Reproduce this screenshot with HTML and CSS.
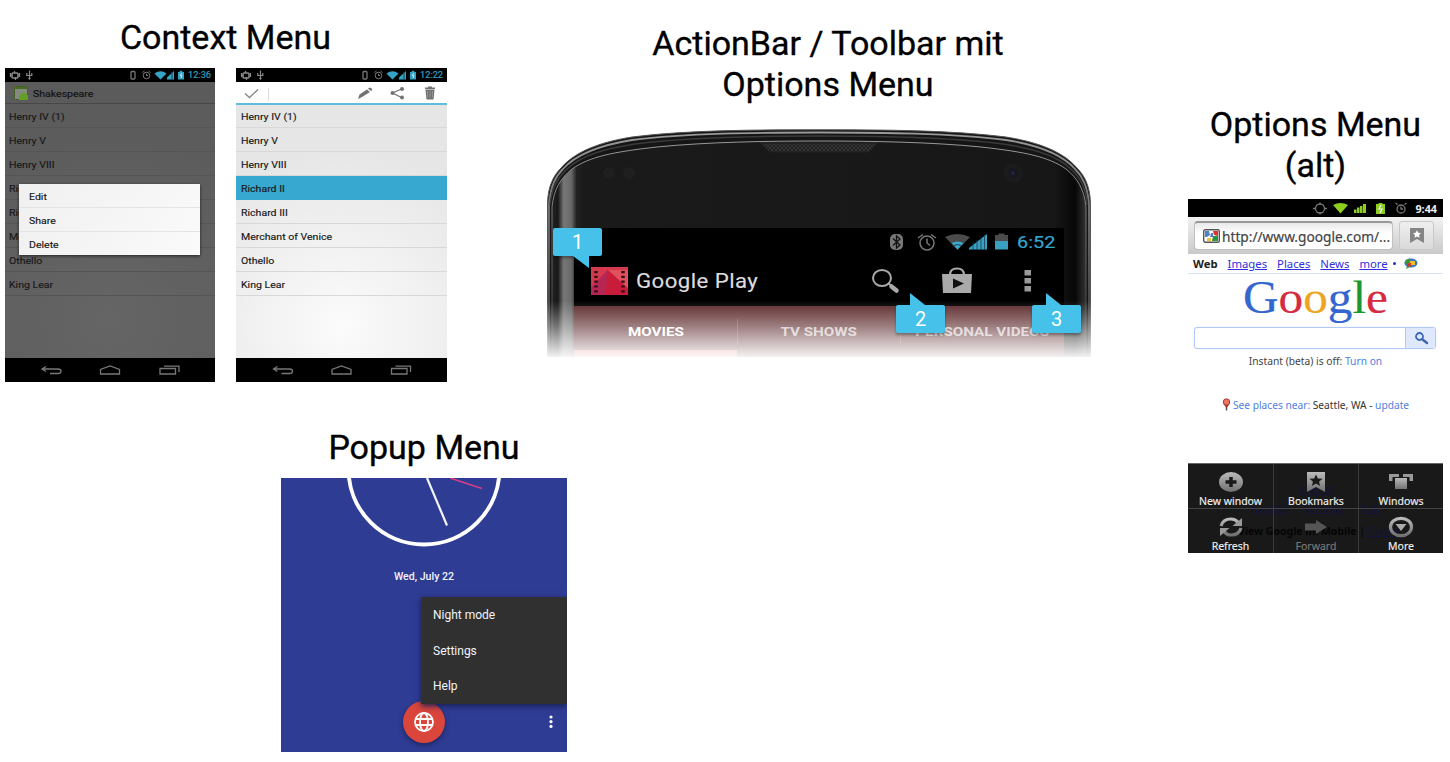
FILE: index.html
```
<!DOCTYPE html>
<html lang="de">
<head>
<meta charset="utf-8">
<title>Android Menus</title>
<link rel="stylesheet" href="styles.css">
</head>
<body>
<svg width="0" height="0" class="defs">
  <defs>
    <symbol id="status-left" viewBox="0 0 34 14"><g fill="none" stroke="#8b8b8b"><rect x="7" y="5" width="6" height="5" rx="1" stroke-width="1.6"/><path d="M5.500 5v4M14.500 5v4M9.500 3v2M10.500 9v3" stroke-width="1.200"/><path d="M24.500 2.500v9M21.800 5v2.500h5V5" stroke-width="1.200"/><circle cx="24.500" cy="10.500" r=".7"/></g></symbol>
    <symbol id="status-right" viewBox="0 0 60 14"><g fill="none" stroke="#777"><rect x="4" y="3.500" width="4" height="7.500" rx="1" stroke-width="1.300"/><circle cx="19.500" cy="7.500" r="3.300"/><path d="M19.500 5.500v2h1.500M15.500 4.500l2-1.500M23.500 4.500l-2-1.500"/></g><g fill="#35a3c5"><path d="M27.500 5.500Q33.500 .8 39.500 5.500L33.500 11.500zM40 11.500V9.500l7-6.500v8.500zM51 4h1.700V2.800h2.600V4H57v7.500h-6z"/></g><path d="M45 4v7.500" stroke="#124355"/><path d="M54.500 5l-1 2.500h1.500l-1 2.500" fill="none" stroke="#c8edf5"/></symbol>
    <symbol id="navigation" viewBox="0 0 210 24"><g fill="none" stroke="#777" stroke-width="1.300"><path d="M41 8.500L37 11l4 2.500M37.500 11H53q3 0 3 2.200T53 15.500H45"/><path d="M95.500 16V11.500L105 8l9.500 3.500V16z"/><path d="M155 10.500h15.500V16H155zM159 8.200h15V14"/></g></symbol>
    <linearGradient id="metal" x1="0" y1="0" x2="0" y2="1"><stop stop-color="#bbb"/><stop offset="1" stop-color="#707070"/></linearGradient>
  </defs>
</svg>
<main class="board">
  <div class="column column-left">
    <section class="context">
      <h1><span class="w">Context Menu</span></h1>
      <div class="pair">
        <div class="phone dim">
          <div class="status"><svg width="34" height="14"><use href="#status-left"/></svg><svg class="push" width="60" height="14"><use href="#status-right"/></svg><span class="t time">12:36</span></div>
          <div class="appbar"><svg width="14" height="14" viewBox="0 0 14 14"><rect x=".5" y=".5" width="13" height="13" rx="1" fill="#858b80" stroke="#426025"/><path d="M0 1h14v2H0z" fill="#476b21"/><path d="M5 14V10l2.500-2.500Q9 5.500 12 7.500l2 2V14z" fill="#659e24"/></svg><span class="t">Shakespeare</span></div>
          <ul class="list"><li><span class="t">Henry IV (1)</span></li><li><span class="t">Henry V</span></li><li><span class="t">Henry VIII</span></li><li><span class="t">Richard II</span></li><li><span class="t">Richard III</span></li><li><span class="t">Merchant of Venice</span></li><li><span class="t">Othello</span></li><li><span class="t">King Lear</span></li></ul>
          <ul class="dialog"><li><span class="t">Edit</span></li><li><span class="t">Share</span></li><li><span class="t">Delete</span></li></ul>
          <svg class="nav" width="210" height="24"><use href="#navigation"/></svg>
        </div>
        <div class="phone light">
          <div class="status"><svg width="34" height="14"><use href="#status-left"/></svg><svg class="push" width="60" height="14"><use href="#status-right"/></svg><span class="t time">12:22</span></div>
          <svg class="actions" width="211" height="23" viewBox="0 0 211 23"><path d="M9 11.500l4.500 4 8.500-8" fill="none" stroke="#888" stroke-width="1.400"/><path d="M32.500 6v13" stroke="#ddd"/><g fill="#727272"><path d="M122 17l1.500-4.500 7.500-5 3 2.500-8 5zM132 6.800l1.500-1.300q2.500.3 2.800 2.200l-1.300 1.200zM189.500 7.500h9l-.8 9q0 1-1 1h-5.400q-1 0-1-1zM189 5.500h3V4.500h4v1h3V7h-10z"/></g><path d="M191.500 9v6.500M194 9v6.500M196.500 9v6.500" stroke="#aaa" stroke-width=".6"/><path d="M165.500 7l-9 4 9 4.500" fill="none" stroke="#727272" stroke-width="1.300"/><g fill="#727272"><circle cx="166" cy="7" r="2"/><circle cx="156.500" cy="11" r="2"/><circle cx="166" cy="15.500" r="2"/></g><path d="M0 22h211" stroke="#63bcdc" stroke-width="2"/></svg>
          <ul class="list"><li><span class="t">Henry IV (1)</span></li><li><span class="t">Henry V</span></li><li><span class="t">Henry VIII</span></li><li class="on"><span class="t">Richard II</span></li><li><span class="t">Richard III</span></li><li><span class="t">Merchant of Venice</span></li><li><span class="t">Othello</span></li><li><span class="t">King Lear</span></li></ul>
          <svg class="nav" width="211" height="24"><use href="#navigation"/></svg>
        </div>
      </div>
    </section>
    <section class="popup">
      <h1><span class="w">Popup Menu</span></h1>
      <div class="clock">
        <svg class="face" width="286" height="70" viewBox="0 0 286 70"><circle cx="143" cy="-9" r="75.500" fill="none" stroke="#fff" stroke-width="4"/><path d="M146 0l20 47.500" stroke="#f4f4fb" stroke-width="2.200"/><path d="M169 0l32 10.500" stroke="#db3f86" stroke-width="1.500"/></svg>
        <p class="date">Wed, July 22</p>
        <div class="fab"><svg width="20" height="20" viewBox="0 0 20 20" fill="none" stroke="#fff" stroke-width="1.800"><circle cx="10" cy="10" r="9"/><ellipse cx="10" cy="10" rx="4" ry="9"/><path d="M1.500 7h17M1.500 13h17"/></svg></div>
        <svg class="more" width="4" height="14" viewBox="0 0 4 14" fill="#fff"><circle cx="2" cy="2" r="1.600"/><circle cx="2" cy="6.700" r="1.600"/><circle cx="2" cy="11.400" r="1.600"/></svg>
        <ul class="popmenu"><li>Night mode</li><li>Settings</li><li>Help</li></ul>
      </div>
    </section>
  </div>

  <section class="column column-mid">
    <h1><span class="w">ActionBar / Toolbar mit</span><br><span class="w">Options Menu</span></h1>
    <div class="device">
      <svg class="shell" width="544" height="228" viewBox="0 0 544 228">
        <defs>
          <linearGradient id="side"><stop stop-color="#222"/><stop offset=".011" stop-color="#181818"/><stop offset=".022" stop-color="#777"/><stop offset=".036" stop-color="#696969"/><stop offset=".046" stop-color="#222"/><stop offset=".06" stop-color="#1a1a1a"/><stop offset=".94" stop-color="#171717"/><stop offset=".98" stop-color="#070707"/><stop offset="1" stop-color="#333"/></linearGradient>
          <linearGradient id="rim" x1="0" y1="0" x2="0" y2="1"><stop stop-color="#999"/><stop offset=".5" stop-color="#666"/><stop offset="1" stop-color="#333"/></linearGradient>
          <pattern id="mesh" width="4" height="4" patternUnits="userSpaceOnUse"><path d="M0 0h2v2H0zM2 2h2v2H2z" fill="#333"/></pattern>
        </defs>
        <path d="M.5 228V74C1 58 6 47 14 39C30 20 60 12 85 8C140 1 210 .8 272 .8S404 1 459 8C484 12 514 20 530 39C538 47 543 58 543.500 74V228z" fill="#151515" stroke="#555"/>
        <path d="M5 228V78C7 59 14 49 25 40C42 28 65 23 110 18C160 13 220 12 272 12S384 13 434 18C479 23 502 28 519 40C530 49 537 59 539 78V228z" fill="url(#side)"/>
        <path d="M2 228V74C4 57 8 48 16 40C32 22 60 15 85 11C140 4 210 3.500 272 3.500S404 4 459 11C484 15 512 22 528 40C536 48 540 57 542 74V228" fill="none" stroke="url(#rim)" stroke-width="1.800"/>
        <path d="M3 76C5 59 10 50 19 41C35 25 62 19 88 15C142 8 210 7 272 7S402 8 456 15C482 19 509 25 525 41C534 50 539 59 540 76" fill="none" stroke="#3b3b3d" stroke-width="1.500"/>
        <path d="M5 228V78C7 59 14 49 25 40C42 28 65 23 110 18C160 13 220 12 272 12S384 13 434 18C479 23 502 28 519 40C530 49 537 59 539 78V228" fill="none" stroke="url(#rim)"/>
        <path d="M206 13q8 0 12 5q3 5.500 8 5.500h93q5 0 8-5.500q4-5 12-5z" fill="#222"/><path d="M215 15h114l-6 7H222z" fill="url(#mesh)"/>
        <circle cx="62" cy="44" r="6" fill="#1f1f1f"/><circle cx="82" cy="44" r="6" fill="#1f1f1f"/><circle cx="466" cy="44" r="10" fill="#1b1b1e"/><circle cx="466" cy="44" r="5" fill="#171722"/><circle cx="466" cy="44" r="1.500" fill="#29294c"/>
      </svg>
      <div class="screen">
        <div class="dstatus">
          <svg width="120" height="20" viewBox="0 0 120 20"><rect x="0" y="2" width="13" height="16" rx="5" fill="#777"/><path d="M3 6.500l7 6.500-3.500 3V4L10 7l-7 6.500" fill="none" stroke="#111" stroke-width="1.300"/><g fill="none" stroke="#777" stroke-width="1.500"><circle cx="37" cy="11" r="7"/><path d="M37 6.500V11l3 2.500M28 6l5-3.500M46 6l-5-3.500"/></g><path d="M55 5q12-6 25 0L67.500 18z" fill="#4b4b4b"/><path d="M61.500 11q6-3 12 0l-6 6.500z" fill="#39a9cf"/><path d="M64 13.500q3.500-2 7 0" fill="none" stroke="#163e4c"/><g fill="#3b9fc2"><path d="M79 17.500V16l18-14v15.500z"/><path d="M105 9h13v8.500h-13z"/></g><path d="M83 10v8M87 8v10M91 5v13M94.500 3v15" stroke="#163e4c" stroke-width=".8"/><path d="M105 3h3.500V1.500h6V3h3.500v6h-13z" fill="#4b4b4b"/></svg>
          <span class="dtime">6:52</span>
        </div>
        <div class="dbar">
          <svg class="film" width="37" height="28" viewBox="0 0 37 28"><path d="M0 0h37v28H0z" fill="#d5394e"/><path d="M17 3L0 21v7h37v-6z" fill="#c41f40"/><path d="M0 20L17 3l6 25H0z" fill="#b52655"/><path d="M17 3l19 17v8H14z" fill="#c91c3a"/><path d="M17 3h20v18z" fill="#e0505d"/><path d="M5 4v22M32 4v22" stroke="#32101a" stroke-width="3.500" stroke-dasharray="2.200 2.600"/></svg>
          <span class="brand">Google Play</span>
          <svg class="dactions" width="164" height="28" viewBox="0 0 164 28"><ellipse cx="11" cy="11" rx="9" ry="8" fill="none" stroke="#aaa" stroke-width="2"/><path d="M17 16l4 3" stroke="#aaa" stroke-width="2"/><path d="M20.500 19.500l5 4" stroke="#aaa" stroke-width="4.500" stroke-linecap="round"/><path d="M71 7h30l-1 19H72z" fill="#aaa"/><path d="M79 8q0-6.500 7-6.500t7 6.500" fill="none" stroke="#aaa" stroke-width="2.200"/><path d="M82 11.500l11 5-11 5z" fill="#111"/><path d="M153.500 3h6.500v5.500h-6.500zM153.500 11h6.500v5.500h-6.500zM153.500 19h6.500v5.500h-6.500z" fill="#999"/></svg>
        </div>
        <div class="tabs"><div class="active"><span>MOVIES</span></div><div><span>TV SHOWS</span></div><div><span>PERSONAL VIDEOS</span></div></div>
      </div>
      <div class="fade"></div>
      <div class="callout c1"><svg width="18" height="12"><path d="M0 0h16v12z" fill="#46c2ea"/></svg>1</div>
      <div class="callout c2"><svg width="18" height="12"><path d="M0 12V0l15 12z" fill="#46c2ea"/></svg>2</div>
      <div class="callout c3"><svg width="18" height="12"><path d="M0 12V0l15 12z" fill="#46c2ea"/></svg>3</div>
    </div>
  </section>

  <section class="column column-right">
    <h1><span class="w">Options Menu</span><br><span class="w">(alt)</span></h1>
    <div class="browser">
      <div class="bstatus"><svg width="96" height="18" viewBox="0 0 96 18"><g fill="none" stroke="#777" stroke-width="1.300"><circle cx="7" cy="9.500" r="4.500"/><path d="M7 3.500v2M7 13.500v2M0 9.500h2.500M11.500 9.500H14M84.500 5.500l-2-1.500M91.500 5.500l2-1.500"/><circle cx="88" cy="10" r="4"/><path d="M88 7.500V10h2"/></g><g fill="#8ccf21"><path d="M20 6q7.500-4 15 0l-7.500 8.500zM41 10.500h2.500v3.500H41zM44 8.500h2.500V14H44zM47 7h2.500v7H47zM50 5h3v9h-3zM63 5h2.500V4h4v1H72v10h-9z"/></g><path d="M68 6l-2 4h3l-2 4" fill="none" stroke="#fff" stroke-width="1.200"/></svg><b>9:44</b></div>
      <div class="urlbar"><div class="url"><svg width="17" height="14" viewBox="0 0 17 14"><rect x=".7" y=".7" width="15.600" height="12.600" rx="1.500" fill="#fff" stroke="#555" stroke-width="1.400"/><path d="M2 2h4l1 4-3 2H2z" fill="#4b83c5"/><path d="M10 2h5v5l-4-1z" fill="#d33"/><path d="M10 7h5v5H9z" fill="#299340"/><path d="M4 9h4v3H4z" fill="#f2c235"/><path d="M8 4h2v4H7z" fill="#4b83c5"/></svg><span>http://www.google.com/...</span></div><div class="bm"><svg width="14" height="15" viewBox="0 0 14 15"><path d="M0 0h14v15l-7-4-7 4z" fill="#858585"/><path d="M7 2l1.200 2.700 2.800.3-2 1.900.6 2.900L7 8.400 4.400 9.800 5 6.900 3 5l2.800-.3z" fill="#fff"/></svg></div></div>
      <div class="links"><b>Web</b><a>Images</a><a>Places</a><a>News</a><a>more</a><i></i><svg width="14" height="11" viewBox="0 0 14 11"><ellipse cx="7" cy="5" rx="6.500" ry="4.500" fill="#3878bd"/><path d="M3 8l-1 3 4-2z" fill="#38983b"/><path d="M.5 5Q1 1 6 .5V6H1z" fill="#38983b"/><path d="M6 3h5v4H6z" fill="#f1bd29"/><path d="M3 5h4v3.500H3z" fill="#c73b2b"/></svg></div>
      <div class="logo"><span class="lb">G</span><span class="lr">o</span><span class="ly">o</span><span class="lb">g</span><span class="lg">l</span><span class="lr">e</span></div>
      <div class="search"><div></div><button aria-label="Search"><svg width="15" height="13" viewBox="0 0 15 13"><circle cx="5.500" cy="4.500" r="3.500" fill="none" stroke="#3d67b4" stroke-width="1.800"/><path d="M8.500 7.500l4.500 3.500" stroke="#3d67b4" stroke-width="2.500" stroke-linecap="round"/></svg></button></div>
      <p class="instant">Instant (beta) is off: <a>Turn on</a></p>
      <p class="near"><svg width="9" height="13" viewBox="0 0 9 13"><path d="M4.500 6v6.500" stroke="#555" stroke-width="1.500"/><path d="M4.500 10L1.500 6h6z" fill="#ad3028"/><circle cx="4.500" cy="4" r="3.200" fill="#ee7565" stroke="#9e3c33"/></svg><span><a>See places near:</a> Seattle, WA - <a>update</a></span></p>
      <div class="options">
        <div class="ghost"><p><u>Sign in</u></p><p><u>iGoogle</u><u>Settings</u><u>Help</u></p><p><b>View Google in: Mobile</b> | <u>Classic</u></p></div>
        <div class="opt"><svg width="26" height="22" viewBox="0 0 26 22"><ellipse cx="13" cy="11" rx="12" ry="10" fill="url(#metal)"/><path d="M13 6v10M7.500 11h11" stroke="#191919" stroke-width="3.500"/></svg><span>New window</span></div>
        <div class="opt"><svg width="26" height="22" viewBox="0 0 26 22"><path d="M4 1h18v20l-9-5-9 5z" fill="url(#metal)"/><path d="M13 3.500l1.800 4 4.700.3-3.500 3 1.200 4.200-4.200-2.400-4.200 2.400 1.200-4.200-3.500-3 4.700-.3z" fill="#191919"/></svg><span>Bookmarks</span></div>
        <div class="opt"><svg width="26" height="22" viewBox="0 0 26 22"><path d="M1 3h10v3H4.500v4H1zM15 3h10v7h-3.500V6H15z" fill="#999"/><path d="M6.500 6.500h13v12h-13z" fill="url(#metal)" stroke="#191919"/></svg><span>Windows</span></div>
        <div class="opt"><svg width="26" height="22" viewBox="0 0 26 22"><g fill="none" stroke="url(#metal)" stroke-width="3.200"><path d="M3 10Q5 3 13 3q4.500 0 7 3.500M23 12q-2 7-10 7-4.500 0-7-3.500"/></g><path d="M24 2v8h-9.500zM2 20v-8h9.500z" fill="#999"/></svg><span>Refresh</span></div>
        <div class="opt off"><svg width="26" height="22" viewBox="0 0 26 22"><path d="M2 7.500h11V4l11 7-11 7v-3.500H2z" fill="#555"/></svg><span>Forward</span></div>
        <div class="opt"><svg width="26" height="22" viewBox="0 0 26 22"><ellipse cx="13" cy="11" rx="10.500" ry="8.700" fill="none" stroke="url(#metal)" stroke-width="3.200"/><path d="M7.500 8h11L13 15z" fill="#aaa"/></svg><span>More</span></div>
      </div>
    </div>
  </section>
</main>
</body>
</html>
```

FILE: styles.css
```
* { box-sizing: border-box; }
body { margin: 0; background: #fff; color: #000; font-family: Roboto, "Liberation Sans", sans-serif; }
.defs { position: absolute; }
h1, p, ul { margin: 0; padding: 0; }
ul { list-style: none; }
svg { display: block; flex: none; }
h1 { font-size: 34px; font-weight: 400; line-height: 41px; text-align: center; white-space: nowrap; -webkit-text-stroke: .35px #000; }
.w { display: inline-block; }
.board { display: flex; width: 1450px; height: 762px; overflow: hidden; }
.column-left { width: 547px; padding: 17px 0 0 5px; flex: none; }
.context { width: 441px; }
.pair { display: flex; gap: 21px; margin-top: 10px; }
.phone { position: relative; display: flex; flex-direction: column; flex: none; width: 210px; height: 314px; font-size: 9.500px; color: #181818; -webkit-text-stroke: .15px; }
.t { display: inline-block; transform: scaleX(1.11); transform-origin: left; white-space: nowrap; }
.status { display: flex; height: 14px; background: #000; align-items: center; }
.push { margin-left: auto; }
.time { width: 27px; margin-left: 1px; color: #35a3c5; font-size: 9px; transform: scaleX(1.03); }
.appbar { display: flex; height: 22px; align-items: center; gap: 5px; padding: 1px 0 0 9px; border-bottom: 1px solid #474747; background: #5b5b5b; color: #111; }
.list li { height: 24px; padding-left: 4px; border-bottom: 1px solid #555; line-height: 25px; }
.dim { background: radial-gradient(circle at 50% 80%, #656565, #5c5c5c 70%); }
.light { width: 211px; background: radial-gradient(circle at 50% 82%, #fbfbfb, #e6e6e6 65%); }
.light .list { margin-top: -1px; }
.light .list li { padding-left: 5px; border-color: #d8d8d8; }
.light .list .on { background: #37a9d0; border-color: #37a9d0; }
.actions { background: #fff; position: relative; }
.nav { margin-top: auto; background: #000; }
.dialog { position: absolute; left: 14px; top: 116px; width: 181px; background: linear-gradient(120deg, #f0f0f0, #fafafa); box-shadow: 0 1px 3px #222; }
.dialog li { height: 24px; padding-left: 10px; line-height: 25px; border-bottom: 1px solid #e4e4e4; }
.dialog li:last-child { height: 23px; border: 0; }
.popup { width: 286px; margin: 45px 0 0 276px; }
.clock { position: relative; height: 274px; margin-top: 10px; background: #2f3c94; color: #f2f3fb; overflow: hidden; font-size: 12px; }
.date { padding-top: 20px; line-height: 18px; font-size: 10.600px; font-weight: 500; text-align: center; }
.fab { position: absolute; left: 122px; top: 223px; width: 42px; height: 42px; border-radius: 50%; background: #da453c; display: grid; place-items: center; box-shadow: 0 2px 5px #1b245f; }
.more { position: absolute; left: 268px; top: 237px; }
.popmenu { position: absolute; left: 140px; top: 119px; width: 146px; height: 107px; background: #303030; box-shadow: 0 2px 6px #17204f; }
.popmenu li { height: 35.700px; line-height: 36px; padding-left: 12px; }
.column-mid { width: 544px; flex: none; padding-top: 23px; }
.column-mid h1 { margin-left: 18px; width: 526px; }
.device { position: relative; height: 228px; margin-top: 24px; padding: 99px 27px 0 27px; }
.shell { position: absolute; left: 0; top: 0; }
.screen { position: relative; width: 490px; height: 129px; background: #000; }
.dstatus { display: flex; justify-content: flex-end; align-items: center; gap: 7px; height: 28px; padding-right: 9px; color: #35a7ce; font-size: 17px; -webkit-text-stroke: .2px; }
.dtime { width: 38px; transform: scaleX(1.17); transform-origin: left; }
.dbar { display: flex; height: 50px; align-items: center; padding-left: 17px; color: #ddd; font-size: 20px; -webkit-text-stroke: .15px; }
.brand { width: 122px; margin-left: 8px; letter-spacing: .4px; white-space: nowrap; transform: scaleX(1.11); transform-origin: left; }
.dactions { margin-left: auto; margin-right: 29px; }
.tabs { display: grid; grid-template-columns: repeat(3, 163px); height: 51px; padding-top: 13px; background: #5c282a; color: #cbbdbd; font-size: 13px; font-weight: 700; line-height: 25px; text-align: center; white-space: nowrap; }
.tabs div { height: 38px; }
.tabs div + div { border-left: 1px solid #7a4c4d; height: 25px; }
.tabs span { display: inline-block; transform: scaleX(1.17); }
.tabs .active { color: #fff; border-bottom: 7px solid #df6a63; }
.fade { position: absolute; left: -1px; right: -1px; bottom: 0; height: 56px; background: linear-gradient(#fff0, #fff6 45%, #fffffff0); }
.callout { position: absolute; width: 49px; height: 28px; border-radius: 2px; background: #46c2ea; color: #fff; font-size: 20px; line-height: 28px; text-align: center; box-shadow: 0 2px 3px #0005; }
.callout svg { position: absolute; }
.c1 { left: 6px; top: 99px; }
.c1 svg { left: 20px; top: 28px; }
.c2 { left: 349px; top: 176px; }
.c3 { left: 485px; top: 176px; }
.c2 svg, .c3 svg { left: 14px; top: -12px; }
.column-right { width: 255px; flex: none; margin-left: 97px; padding-top: 104px; }
.browser { height: 354px; margin-top: 13px; background: #fff; font-family: "Noto Sans", "Open Sans", sans-serif; white-space: nowrap; }
.bstatus { height: 18px; display: flex; align-items: center; justify-content: flex-end; gap: 6px; padding-right: 6px; background: #000; color: #eee; font-size: 10.800px; }
.urlbar { display: flex; height: 37px; padding: 4px 9px 4px 6px; gap: 6px; background: linear-gradient(#f2f2f2, #c9c9c9); }
.url { display: flex; align-items: center; gap: 2px; width: 199px; padding-left: 8px; border: 1px solid #c0c0c0; border-top: 2px solid #999; border-radius: 4px; background: linear-gradient(#e9e9e9, #fff 40%); color: #444; font-size: 13.700px; -webkit-text-stroke: .2px; }
.bm { display: grid; place-items: center; flex: 1; border: 1px solid #c9c9c9; border-radius: 3px; background: linear-gradient(#efefef, #dadada); }
.links { display: flex; height: 20px; align-items: center; padding-left: 5px; gap: 10px; border-bottom: 1px solid #dbe3fa; font-size: 11.300px; color: #222; }
.links a { color: #2f2fdd; text-decoration: underline; }
.links i { width: 3px; height: 3px; background: #2929c4; margin: 0 -2px 0 -5px; border-radius: 50%; }
.logo { height: 53px; font: 46px/48px "Liberation Serif", serif; text-align: center; transform: scaleX(1.07); -webkit-text-stroke: .2px; }
.lb { color: #3566d0; }
.lr { color: #d52a3f; }
.ly { color: #eda421; }
.lg { color: #1b972e; }
.search { display: flex; width: 242px; height: 22px; margin-left: 6px; border: 1px solid #b4c8f5; border-radius: 3px; box-shadow: 0 0 1px #a9c1f3; }
.search div { flex: 1; }
.search button { width: 30px; padding: 0 0 0 8px; border: 0; border-left: 1px solid #b4c8f5; background: #dfe8fc; }
.instant { margin-top: 5px; text-align: center; font-size: 10.250px; line-height: 15px; color: #444; }
.instant a, .near a { color: #4f7fe0; }
.near { display: flex; align-items: center; justify-content: center; gap: 2px; height: 15px; margin-top: 28px; font-size: 10.200px; color: #333; }
.options { position: relative; display: grid; grid-template-columns: repeat(3, 85px); grid-template-rows: 45px 45px; margin-top: 51px; background: #191919; border-top: 1px solid #666; height: 90px; overflow: hidden; }
.opt { position: relative; display: flex; flex-direction: column; align-items: center; padding-top: 7px; color: #eee; font-size: 10.500px; line-height: 13px; border-left: 1px solid #3a3a3a; border-bottom: 1px solid #444; gap: 2px; -webkit-text-stroke: .15px; }
.opt:nth-of-type(3n + 2) { border-left: 0; }
.opt:nth-of-type(n + 5) { border-bottom: 0; }
.off { color: #777; }
.ghost { position: absolute; inset: 16px 0 0; color: #050505; font-size: 10.500px; line-height: 19px; text-align: center; }
.ghost u { color: #12123a; margin: 0 7px; }
.ghost p:last-child { margin: 4px 0 0 8px; }
.ghost p:last-child u { margin: 0; }
```
